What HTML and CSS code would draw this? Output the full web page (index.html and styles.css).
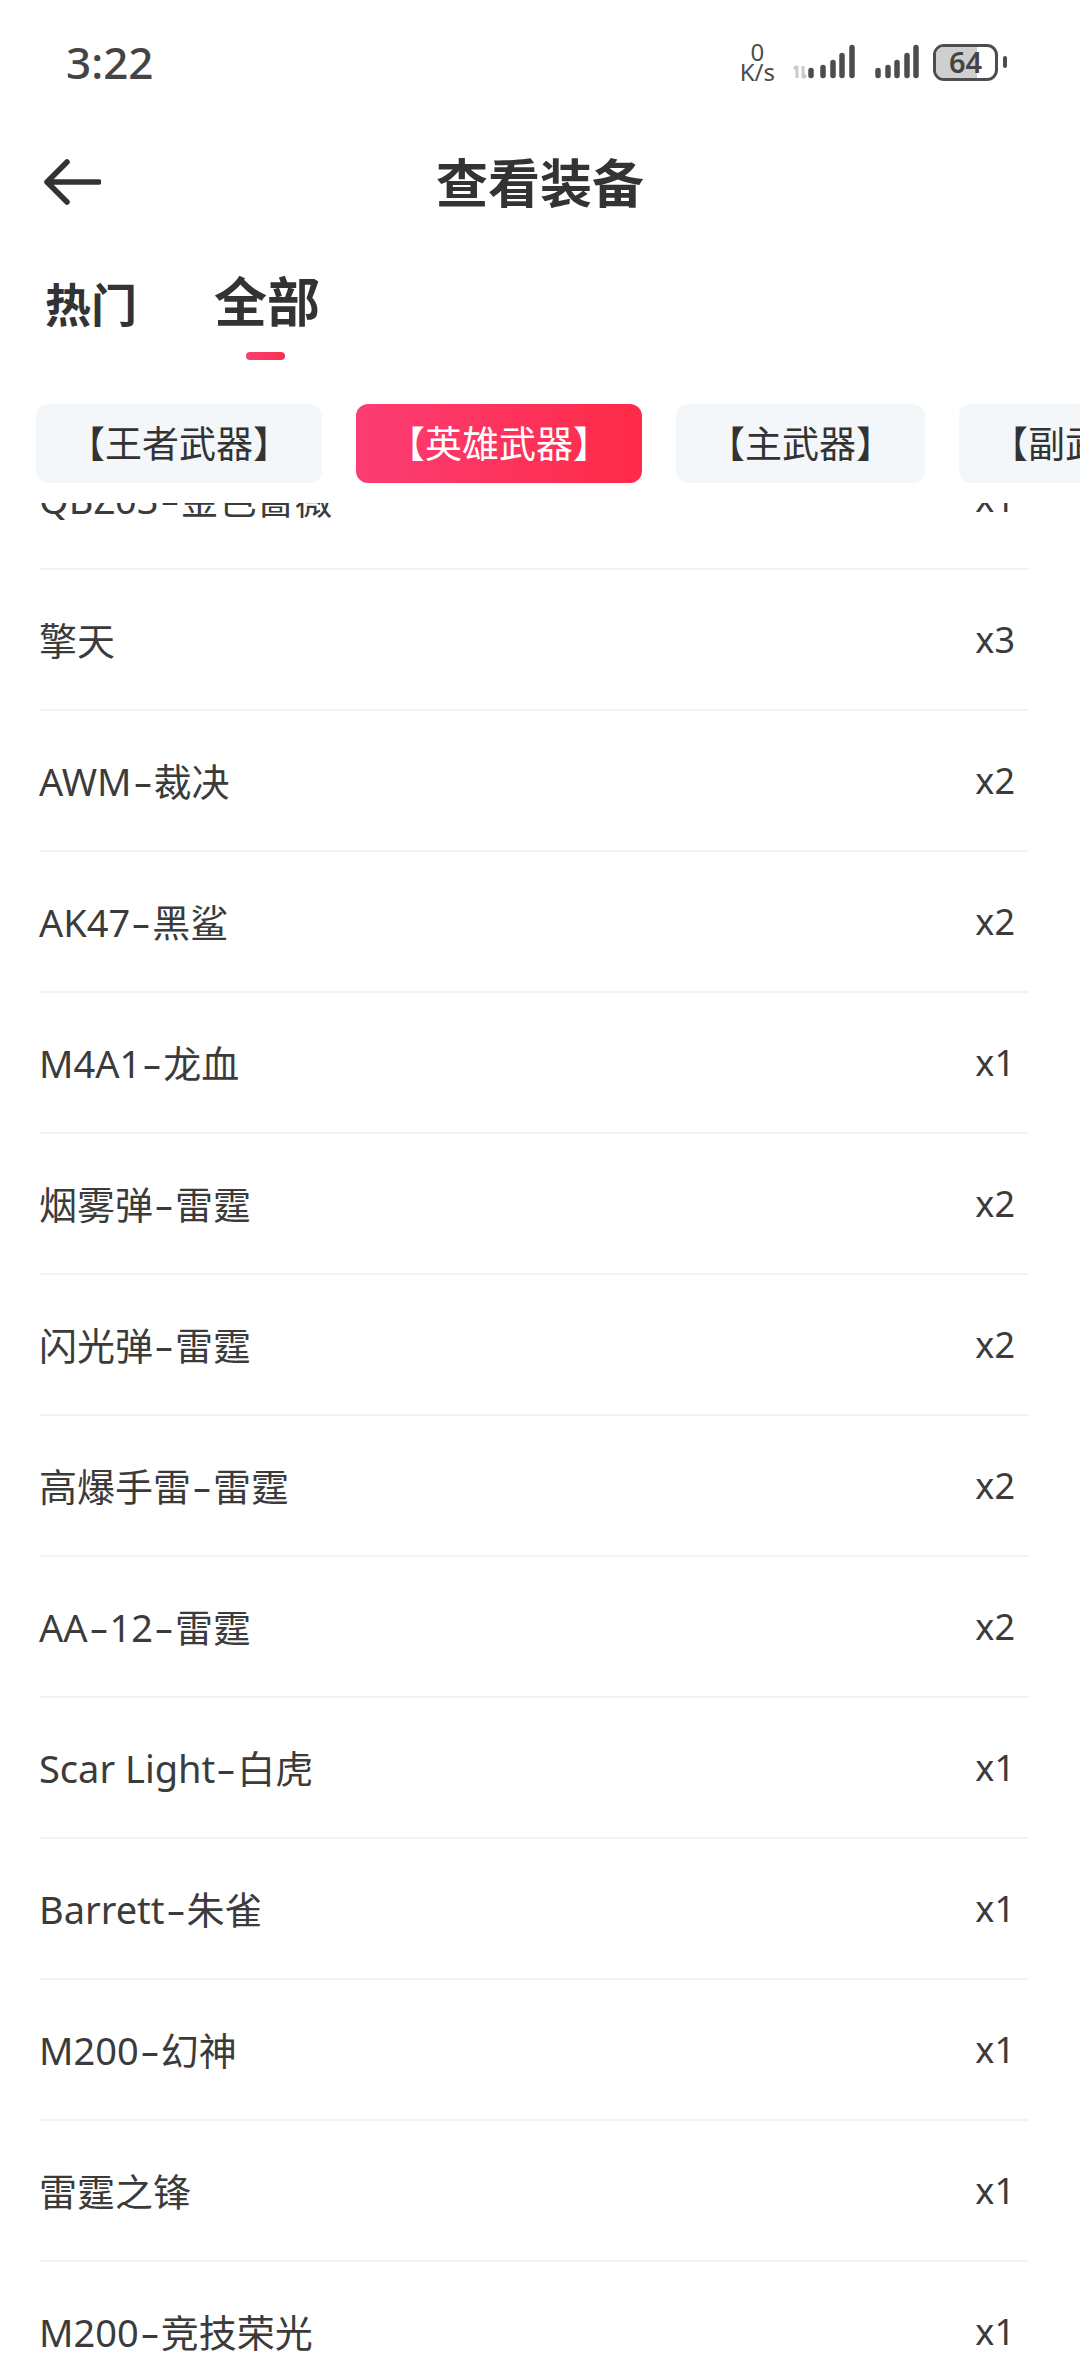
FILE: index.html
```html
<!DOCTYPE html>
<html>

<head>
    <title>查看装备</title>
    <link rel="stylesheet" href="styles.css">
</head>

<body>
    <div class="page">
        <div class="statusbar">
            <span class="time">3:22</span>
            <div class="status-icons">
                <div class="speed"><span>0</span><span>K/s</span></div>
                <svg class="signal-one" width="62" height="36" viewBox="0 0 62 36">
                    <path d="M4 22l-3 3M4 22v12M10 34V22M10 34l3-3" fill="none" stroke="#c9c9c9" stroke-width="3" />
                    <g stroke="#4d4d4d" stroke-width="5.5" stroke-linecap="round" fill="none">
                        <path d="M18 26.5v5M30 23.5v8M40 18.5v13M49 11.5v20M59 3.5v28" />
                    </g>
                </svg>
                <svg class="signal-two" width="46" height="36" viewBox="0 0 46 36">
                    <g stroke="#4d4d4d" stroke-width="5.5" stroke-linecap="round" fill="none">
                        <path d="M3 26.5v5M13 23.5v8M22 18.5v13M32 11.5v20M41 3.5v28" />
                    </g>
                </svg>
                <div class="battery">
                    <div class="battery-body">
                        <div class="battery-fill"></div>
                        <span>64</span>
                    </div>
                    <div class="battery-cap"></div>
                </div>
            </div>
        </div>

        <div class="titlebar">
            <svg class="back" width="58" height="46" viewBox="0 0 58 46">
                <path d="M24 3L4 23l20 20M4 23h52" fill="none" stroke="#333" stroke-width="5.5" stroke-linecap="round" stroke-linejoin="round" />
            </svg>
            <h1>查看装备</h1>
        </div>

        <div class="tabs">
            <div class="tab">热门</div>
            <div class="tab active">全部</div>
        </div>

        <div class="chips">
            <div class="chip">【王者武器】</div>
            <div class="chip selected">【英雄武器】</div>
            <div class="chip">【主武器】</div>
            <div class="chip">【副武器】</div>
        </div>

        <div class="list">
            <div class="rows">
                <div class="row"><span class="name">QBZ03<span class="dash">-</span>金色蔷薇</span><span class="count">x1</span></div>
                <div class="row"><span class="name">擎天</span><span class="count">x3</span></div>
                <div class="row"><span class="name">AWM<span class="dash">-</span>裁决</span><span class="count">x2</span></div>
                <div class="row"><span class="name">AK47<span class="dash">-</span>黑鲨</span><span class="count">x2</span></div>
                <div class="row"><span class="name">M4A1<span class="dash">-</span>龙血</span><span class="count">x1</span></div>
                <div class="row"><span class="name">烟雾弹<span class="dash">-</span>雷霆</span><span class="count">x2</span></div>
                <div class="row"><span class="name">闪光弹<span class="dash">-</span>雷霆</span><span class="count">x2</span></div>
                <div class="row"><span class="name">高爆手雷<span class="dash">-</span>雷霆</span><span class="count">x2</span></div>
                <div class="row"><span class="name">AA<span class="dash">-</span>12<span class="dash">-</span>雷霆</span><span class="count">x2</span></div>
                <div class="row"><span class="name">Scar Light<span class="dash">-</span>白虎</span><span class="count">x1</span></div>
                <div class="row"><span class="name">Barrett<span class="dash">-</span>朱雀</span><span class="count">x1</span></div>
                <div class="row"><span class="name">M200<span class="dash">-</span>幻神</span><span class="count">x1</span></div>
                <div class="row"><span class="name">雷霆之锋</span><span class="count">x1</span></div>
                <div class="row"><span class="name">M200<span class="dash">-</span>竞技荣光</span><span class="count">x1</span></div>
            </div>
        </div>
    </div>
</body>

</html>
```

FILE: styles.css
```css
html,
body {
    margin: 0;
    padding: 0;
    background-color: #fff;
}

body {
    font-family: "Noto Sans", "Noto Sans CJK SC", sans-serif;
    color: #333;
}

.page {
    width: 1080px;
    height: 2373px;
    overflow: hidden;
    display: flex;
    flex-direction: column;
}

.statusbar {
    height: 124px;
    flex: none;
    display: flex;
    justify-content: space-between;
    align-items: center;
    padding: 0 73px 0 66px;
    box-sizing: border-box;
}

.time {
    font-size: 44px;
    font-weight: 500;
    color: #444;
}

.status-icons {
    display: flex;
    align-items: center;
    height: 40px;
}

.speed {
    display: flex;
    flex-direction: column;
    align-items: center;
    font-size: 24px;
    line-height: 20px;
    color: #4d4d4d;
    margin-right: 18px;
}

.signal-one {
    margin-right: 20px;
}

.signal-two {
    margin-right: 12px;
}

.battery {
    display: flex;
    align-items: center;
    gap: 5px;
}

.battery-body {
    position: relative;
    width: 65px;
    height: 37px;
    border: 3px solid #4d4d4d;
    border-radius: 11px;
    box-sizing: border-box;
    display: flex;
    align-items: center;
    justify-content: center;
    overflow: hidden;
}

.battery-fill {
    position: absolute;
    left: 0;
    top: 0;
    bottom: 0;
    width: 70%;
    background-color: #cfcfcf;
}

.battery-body span {
    position: relative;
    font-size: 29px;
    font-weight: 600;
    line-height: 30px;
    color: #444;
}

.battery-cap {
    width: 4px;
    height: 12px;
    border-radius: 2px;
    background-color: #4d4d4d;
}

.titlebar {
    position: relative;
    height: 118px;
    flex: none;
    display: flex;
    align-items: center;
    justify-content: center;
}

.titlebar h1 {
    margin: 0 0 5px;
    font-size: 52px;
    font-weight: 700;
}

.back {
    position: absolute;
    left: 43px;
    top: 35px;
}

.tabs {
    height: 162px;
    box-sizing: border-box;
    padding-top: 22px;
    flex: none;
    display: flex;
    align-items: flex-start;
    gap: 77px;
    padding-left: 45px;
}

.tab {
    font-size: 46px;
    font-weight: 700;
    line-height: 68px;
    margin-top: 6px;
    position: relative;
}

.tab.active {
    font-size: 53px;
    margin-top: 0;
    line-height: 76px;
}

.tab.active::after {
    content: "";
    position: absolute;
    left: 32px;
    top: 88px;
    width: 39px;
    height: 8px;
    border-radius: 4px;
    background: linear-gradient(90deg, #f83f72, #f9304f);
}

.chips {
    flex: none;
    display: flex;
    gap: 34px;
    padding-left: 36px;
    height: 79px;
    margin-bottom: 20px;
}

.chip {
    flex: none;
    padding: 0 32px;
    height: 79px;
    line-height: 79px;
    font-size: 37px;
    border-radius: 12px;
    background-color: #f4f7f9;
}

.chip.selected {
    color: #fff;
    background: linear-gradient(90deg, #fb3d74, #ff2a47);
}

.list {
    flex: 1;
    overflow: hidden;
}

.rows {
    margin-top: -74px;
    padding: 0 51px 0 39px;
}

.row {
    height: 141px;
    box-sizing: border-box;
    display: flex;
    justify-content: space-between;
    align-items: center;
    border-bottom: 2px solid #f3f3f3;
    font-size: 38px;
    color: #3b3b3b;
    padding-right: 14px;
}

.name {
    margin-bottom: 3px;
}

.dash {
    display: inline-block;
    width: 22px;
    text-align: center;
    transform: scaleX(1.6);
}

.count {
    font-size: 36px;
}
```
